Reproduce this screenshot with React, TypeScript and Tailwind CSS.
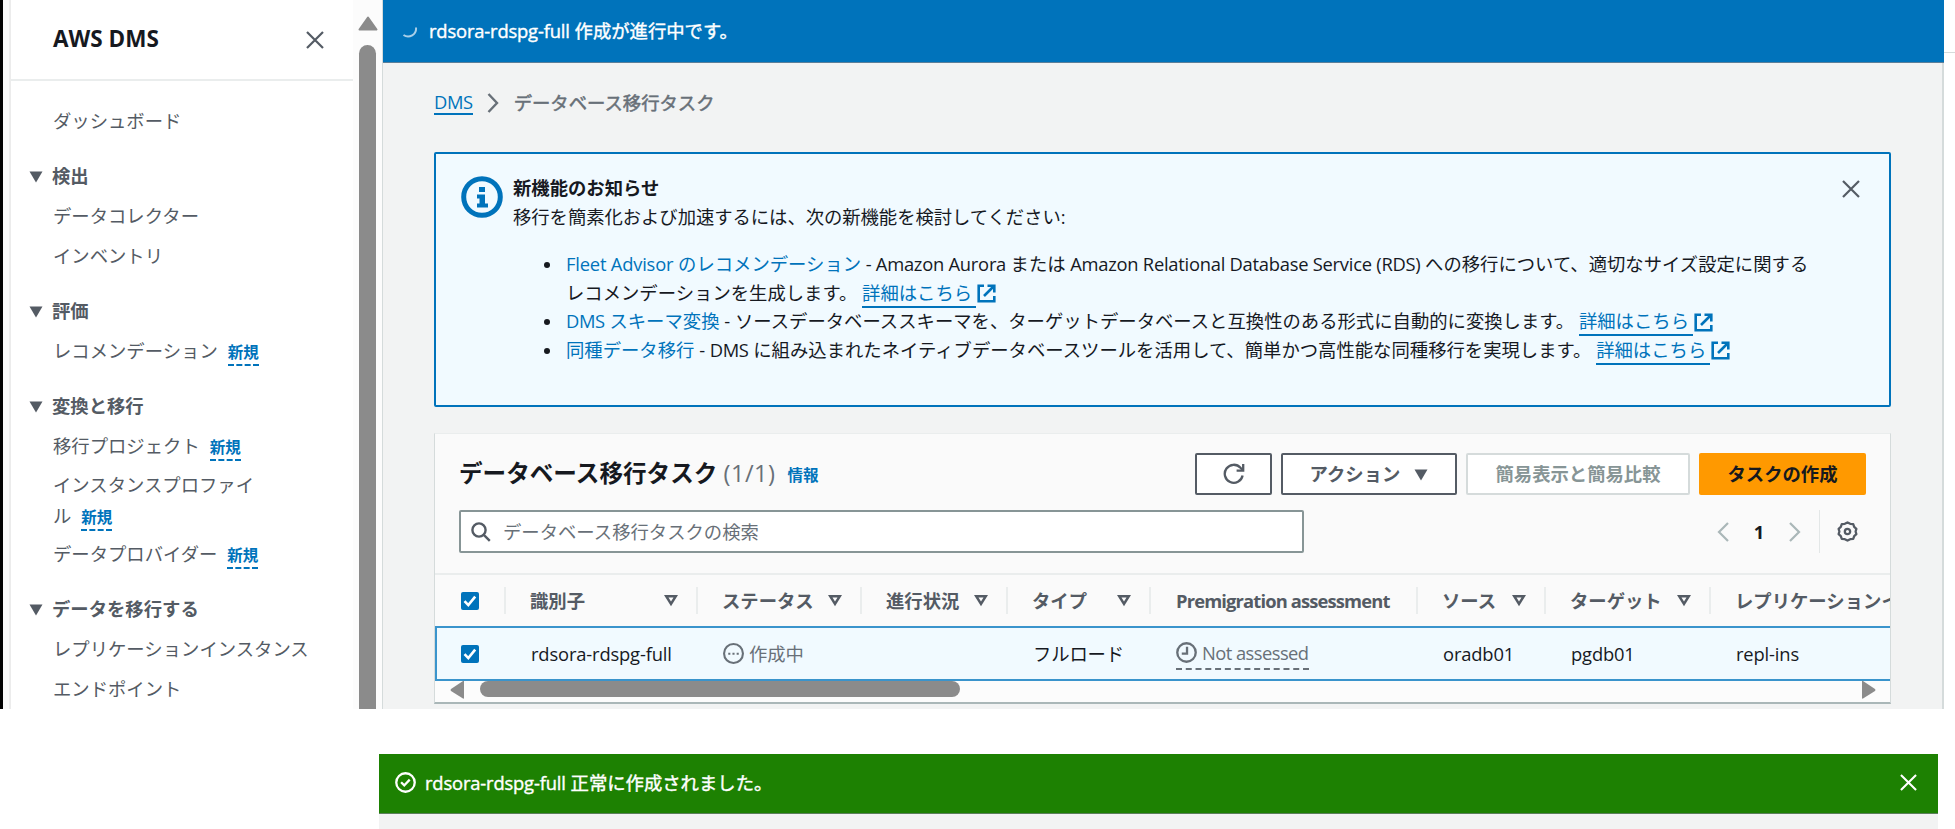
import type { ReactNode } from 'react'

function CloseIcon({ className }: { className?: string }) {
  return (
    <svg viewBox="0 0 18 18" className={className} fill="none" stroke="currentColor" strokeWidth="2.2">
      <path d="M1 1l16 16M17 1L1 17" />
    </svg>
  )
}

function ExternalIcon() {
  return (
    <svg viewBox="0 0 19 19" className="inline-block w-[19px] h-[19px] shrink-0" fill="none" stroke="currentColor" strokeWidth="2.6">
      <path d="M7 1.7H1.7v15.6h15.6V12" />
      <path d="M10.5 1.7h6.8v6.8M17 2L7 12" />
    </svg>
  )
}

function SortIcon() {
  return (
    <svg viewBox="0 0 14 13" className="w-[14px] h-[13px] shrink-0" fill="none" stroke="#545b64" strokeWidth="2.5">
      <path d="M2.2 2.2h9.6L7 9.8z" />
    </svg>
  )
}

function CaretDown() {
  return (
    <svg viewBox="0 0 14 12" className="w-[14px] h-[12px] mt-[2px] shrink-0" fill="#545b64">
      <path d="M0.5 0.5h13L7 11.5z" />
    </svg>
  )
}

function Checkbox() {
  return (
    <span className="flex items-center justify-center w-[18px] h-[18px] rounded-[2px] bg-[#0073bb] shrink-0">
      <svg viewBox="0 0 18 18" className="w-[18px] h-[18px]" fill="none" stroke="#fff" strokeWidth="2.6">
        <path d="M3.5 9.2l3.8 3.9L14.2 4.6" />
      </svg>
    </span>
  )
}

type NavItem = { label: string; isNew?: boolean }
type NavGroup = { title: string; items: NavItem[] }

const navGroups: NavGroup[] = [
  { title: '検出', items: [{ label: 'データコレクター' }, { label: 'インベントリ' }] },
  { title: '評価', items: [{ label: 'レコメンデーション', isNew: true }] },
  {
    title: '変換と移行',
    items: [
      { label: '移行プロジェクト', isNew: true },
      { label: 'インスタンスプロファイル', isNew: true },
      { label: 'データプロバイダー', isNew: true },
    ],
  },
  { title: 'データを移行する', items: [{ label: 'レプリケーションインスタンス' }, { label: 'エンドポイント' }] },
]

function NewBadge() {
  return (
    <span className="ml-[10px] text-[15.5px] leading-[20px] font-bold text-[#0073bb] border-b-2 border-dashed border-[#0073bb] pb-px">
      新規
    </span>
  )
}

function Sidebar() {
  return (
    <aside className="flex w-[383px] h-full shrink-0">
      <div className="w-[3px] bg-black" />
      <div className="w-[8px] bg-[#f9f9f9] border-r-2 border-[#ececec]" />
      <div className="w-[342px] text-[#545b64] overflow-hidden">
        <div className="flex items-center justify-between h-[81px] pl-[42px] pr-[29px] border-b-2 border-[#eaeded]">
          <h2 className="mt-[-1px] text-[22.5px] font-bold text-[#16191f]">AWS DMS</h2>
          <CloseIcon className="w-[18px] h-[18px]" />
        </div>
        <a className="flex items-center h-[40px] mt-[20px] pl-[42px]">ダッシュボード</a>
        {navGroups.map((group) => (
          <div key={group.title} className="mt-[14px]">
            <div className="flex items-center h-[41px] pl-[18px] gap-[9px] font-bold">
              <CaretDown />
              {group.title}
            </div>
            {group.items.map((item) => (
              <div key={item.label} className="flex items-center min-h-[40px] pl-[42px]">
                {item.label.length > 11 && item.isNew ? (
                  <div className="py-[3px] leading-[31px] whitespace-nowrap">
                    {item.label.slice(0, -1)}
                    <br />
                    {item.label.slice(-1)}
                    <NewBadge />
                  </div>
                ) : (
                  <div className="mt-[-1px] leading-[31px] whitespace-nowrap">
                    {item.label}
                    {item.isNew && <NewBadge />}
                  </div>
                )}
              </div>
            ))}
          </div>
        ))}
      </div>
      <div className="flex flex-col items-center w-[30px] pt-[16px] bg-[#fcfcfc] border-r border-[#d5dbdb]">
        <svg viewBox="0 0 20 15" className="w-[20px] h-[15px] shrink-0" fill="#8b8b8b" stroke="#8b8b8b" strokeWidth="2" strokeLinejoin="round">
          <path d="M10 1.5L18.5 13.5h-17z" />
        </svg>
        <div className="w-[17px] mt-[14px] grow bg-[#8b8b8b] rounded-t-full" />
      </div>
    </aside>
  )
}

function DetailLink() {
  return (
    <a className="text-[#0073bb]">
      <span className="border-b-2 border-[#0073bb] pr-[4px] pb-px">詳細はこちら</span>
      <span className="inline-block align-[1px] h-[19px] leading-[0] ml-px">
        <ExternalIcon />
      </span>
    </a>
  )
}

function NewsItem({ children }: { children: ReactNode }) {
  return (
    <li className="flex">
      <span className="w-[6px] h-[6px] mt-[12px] mr-[16px] rounded-full bg-[#16191f] shrink-0" />
      <div className="whitespace-nowrap">{children}</div>
    </li>
  )
}

function NewsPanel() {
  return (
    <section className="flex mt-[35px] w-[1457px] h-[255px] bg-[#f1faff] border-2 border-[#0073bb] rounded-[2px] pl-[25px] pr-[29px] text-[#16191f]">
      <svg viewBox="0 0 42 42" className="w-[42px] h-[42px] mt-[22px] shrink-0" fill="none" stroke="#0073bb" strokeWidth="5">
        <circle cx="21" cy="21" r="18.3" />
        <path d="M18 11h6v5h-6zM16 18.5h8v9h3v4H16v-4h2.5v-5H16z" fill="#0073bb" stroke="none" />
      </svg>
      <div className="ml-[10px] mt-[20px] grow leading-[28.5px]">
        <h3 className="font-bold">新機能のお知らせ</h3>
        <p className="tracking-[-0.05px]">移行を簡素化および加速するには、次の新機能を検討してください:</p>
        <ul className="mt-[19px] ml-[31px]">
          <NewsItem>
            <a className="text-[#0073bb]"><span className="tracking-[-0.2px]">Fleet Advisor</span> のレコメンデーション</a>
            <span className="tracking-[-0.25px]"> - Amazon Aurora </span>または
            <span className="tracking-[-0.25px]"> Amazon Relational Database Service (RDS) </span>
            への移行について、適切なサイズ設定に関する
            <br />
            レコメンデーションを生成します。 <DetailLink />
          </NewsItem>
          <NewsItem>
            <a className="text-[#0073bb]"><span className="tracking-[-0.4px]">DMS</span> スキーマ変換</a> - ソースデータベーススキーマを、ターゲットデータベースと互換性のある形式に自動的に変換します。 <DetailLink />
          </NewsItem>
          <NewsItem>
            <a className="text-[#0073bb]">同種データ移行</a> - <span className="tracking-[-0.4px]">DMS</span> に組み込まれたネイティブデータベースツールを活用して、簡単かつ高性能な同種移行を実現します。 <DetailLink />
          </NewsItem>
        </ul>
      </div>
      <CloseIcon className="w-[18px] h-[18px] mt-[26px] text-[#545b64] shrink-0" />
    </section>
  )
}

const columns = [
  { label: '識別子', width: 'w-[192px]', sort: true },
  { label: 'ステータス', width: 'w-[164px]', sort: true },
  { label: '進行状況', width: 'w-[146px]', sort: true },
  { label: 'タイプ', width: 'w-[143px]', sort: true },
  { label: 'Premigration assessment', width: 'w-[267px]', sort: false },
  { label: 'ソース', width: 'w-[128px]', sort: true },
  { label: 'ターゲット', width: 'w-[165px]', sort: true },
  { label: 'レプリケーションインスタンス', width: 'w-[320px]', sort: false },
]

function StatusCell() {
  return (
    <span className="flex items-center gap-[5px] text-[#687078]">
      <svg viewBox="0 0 20 20" className="w-[21px] h-[21px]" fill="none" stroke="currentColor" strokeWidth="2">
        <circle cx="10" cy="10" r="9" />
        <path d="M5 10.2h2M9 10.2h2M13 10.2h2" />
      </svg>
      作成中
    </span>
  )
}

function AssessmentCell() {
  return (
    <span className="flex items-center h-[32px] gap-[5px] text-[#687078] border-b-2 border-dashed border-[#687078]">
      <svg viewBox="0 0 20 20" className="w-[21px] h-[21px]" fill="none" stroke="currentColor" strokeWidth="2.2">
        <circle cx="10" cy="10" r="8.8" />
        <path d="M10.5 4.5v6.5H5.5" />
      </svg>
      <span className="tracking-[-0.55px]">Not assessed</span>
    </span>
  )
}

const cells: ReactNode[] = [
  'rdsora-rdspg-full',
  <StatusCell />,
  '',
  'フルロード',
  <AssessmentCell />,
  'oradb01',
  'pgdb01',
  'repl-ins',
]

function TaskTable() {
  return (
    <section className="mt-[26px] w-[1457px] h-[271px] bg-[#fafafa] border border-t-[#eaeded] border-x-[#d5dbdb] border-b-2 border-b-[#aab7b8] overflow-hidden">
      <div className="flex items-center h-[42px] mt-[19px] pl-[24px] pr-[24px]">
        <h2 className="mt-[-2px] text-[23.6px] font-bold text-[#16191f]">
          データベース移行タスク <span className="font-normal tracking-[0.5px] text-[#687078]">(1/1)</span>
        </h2>
        <a className="ml-[12px] mt-[2px] text-[15.5px] font-bold text-[#0073bb]">情報</a>
        <div className="flex ml-auto gap-[9px] h-[42px] font-bold text-[#545b64]">
          <button className="flex items-center justify-center w-[77px] bg-white border-2 border-[#545b64] rounded-[2px]">
            <svg viewBox="0 0 22 22" className="w-[22px] h-[22px]" fill="none" stroke="currentColor" strokeWidth="2.3">
              <path d="M19.6 12.5A9 9 0 1 1 17.5 4.8L20 7.2" />
              <path d="M20.2 1v6.6h-6.6" />
            </svg>
          </button>
          <button className="flex items-center justify-center gap-[14px] w-[176px] bg-white border-2 border-[#545b64] rounded-[2px]">
            アクション
            <CaretDown />
          </button>
          <button className="w-[224px] bg-white border-2 border-[#d5dbdb] rounded-[2px] text-[#879596]">簡易表示と簡易比較</button>
          <button className="w-[167px] bg-[#ff9900] rounded-[2px] text-[#16191f]">タスクの作成</button>
        </div>
      </div>

      <div className="flex items-center h-[43px] mt-[15px] pl-[24px] pr-[32px]">
        <div className="flex items-center w-[845px] h-full pl-[10px] bg-white border-2 border-[#879596] rounded-[2px] text-[#687078]">
          <svg viewBox="0 0 20 20" className="w-[20px] h-[20px] mr-[12px]" fill="none" stroke="#545b64" strokeWidth="2.4">
            <circle cx="8" cy="8" r="6.6" />
            <path d="M12.8 12.8l6 6" />
          </svg>
          データベース移行タスクの検索
        </div>
        <div className="flex items-center h-full ml-auto">
          <svg viewBox="0 0 12 20" className="w-[12px] h-[20px]" fill="none" stroke="#aab7b8" strokeWidth="2.2">
            <path d="M11 1L2 10l9 9" />
          </svg>
          <span className="w-[60px] text-center font-bold text-[#16191f]">1</span>
          <svg viewBox="0 0 12 20" className="w-[12px] h-[20px]" fill="none" stroke="#aab7b8" strokeWidth="2.2">
            <path d="M1 1l9 9-9 9" />
          </svg>
          <span className="w-px h-full ml-[18px] mr-[17px] bg-[#e3e7e7]" />
          <svg viewBox="0 0 22 22" className="w-[21px] h-[21px]" fill="none" stroke="#545b64" strokeWidth="2.4" strokeLinejoin="round">
            <path d="M11 1.5l2.8 1.5 3.2.2 1 3 2.3 2-.8 2.8.8 2.8-2.3 2-1 3-3.2.2L11 20.5l-2.8-1.5-3.2-.2-1-3-2.3-2 .8-2.8-.8-2.8 2.3-2 1-3 3.2-.2z" />
            <circle cx="11" cy="11" r="2.8" />
          </svg>
        </div>
      </div>

      <div className="flex items-center h-[53px] mt-[20px] border-t-2 border-[#eaeded] font-bold text-[#545b64]">
        <div className="w-[69px] pl-[26px] shrink-0">
          <Checkbox />
        </div>
        {columns.map((col) => (
          <div key={col.label} className={`flex items-center justify-between h-[27px] pl-[24px] pr-[18px] border-l-2 border-[#eaeded] shrink-0 whitespace-nowrap ${col.width}`}>
            {col.sort ? col.label : <span className={col.label.startsWith('P') ? 'pl-px tracking-[-0.85px]' : ''}>{col.label}</span>}
            {col.sort && <SortIcon />}
          </div>
        ))}
      </div>

      <div className="flex items-center w-[1800px] h-[55px] bg-[#f1faff] border-2 border-[#3a94cc] text-[#16191f]">
        <div className="w-[67px] pl-[24px] shrink-0">
          <Checkbox />
        </div>
        {cells.map((cell, i) => (
          <div key={columns[i].label} className={`flex items-center pl-[27px] shrink-0 whitespace-nowrap tracking-[-0.15px] ${columns[i].width}`}>
            {cell}
          </div>
        ))}
      </div>

      {/* horizontal scrollbar */}
      <div className="flex items-start h-[22px] pl-[15px] pr-[14px] bg-[#fcfcfc]">
        <svg viewBox="0 0 15 18" className="w-[15px] h-[18px]" fill="#8b8b8b">
          <path d="M14 0v17q0 1-1 .5L1 10Q0 9 1 8L13 0z" />
        </svg>
        <div className="w-[480px] h-[16px] ml-[15px] bg-[#8b8b8b] rounded-full" />
        <svg viewBox="0 0 15 18" className="w-[15px] h-[18px] ml-auto" fill="#8b8b8b">
          <path d="M1 0v17q0 1 1 .5L14 10q1-1 0-2L2 0z" />
        </svg>
      </div>
    </section>
  )
}

export default function App() {
  return (
    <div className="w-[1955px] h-[829px] overflow-hidden bg-white text-[18.35px] leading-[28px] font-['Open_Sans','Noto_Sans_CJK_JP',sans-serif]">
      <div className="flex h-[709px] overflow-hidden">
        <Sidebar />
        <main className="w-[1561px] bg-[#f2f3f3] border-r-2 border-[#d5dbdb] shrink-0">
          <div className="flex items-center w-[1561px] h-[63px] pl-[19px] bg-[#0073bb] border-b border-[#5c7f99] text-white">
            <svg viewBox="0 0 16 16" className="w-[16px] h-[16px] mr-[11px]" fill="none" stroke="#a9cfe8" strokeWidth="2">
              <path d="M14 4.5A8 8 0 0 1 1.5 12" />
            </svg>
            <span className="[-webkit-text-stroke:0.4px_currentColor]">
              <span className="tracking-[-0.15px]">rdsora-rdspg-full</span> 作成が進行中です。
            </span>
          </div>
          <div className="pl-[51px]">
            <nav className="flex items-center h-[28px] mt-[26px] text-[#687078]">
              <a className="leading-[22px] tracking-[-0.4px] border-b-2 border-[#0073bb] text-[#0073bb]">DMS</a>
              <svg viewBox="0 0 12 20" className="w-[12px] h-[20px] ml-[14px] mr-[15px]" fill="none" stroke="#687078" strokeWidth="2.4">
                <path d="M1.5 1l8.5 9-8.5 9" />
              </svg>
              <span className="[-webkit-text-stroke:0.5px_currentColor]">データベース移行タスク</span>
            </nav>
            <NewsPanel />
            <TaskTable />
          </div>
        </main>
        <div className="grow h-[53px] border-b border-[#d5dbdb]" />
      </div>

      <div className="w-[1559px] h-[75px] ml-[379px] mt-[45px] bg-[#f2f3f3]">
        <div className="flex items-center h-[60px] pl-[16px] pr-[21px] bg-[#1d8102] border-b border-[#5c7f5c] text-white">
          <svg viewBox="0 0 20 20" className="w-[21px] h-[21px] mt-[-2px] mr-[9px]" fill="none" stroke="currentColor" strokeWidth="2.2">
            <circle cx="10" cy="10" r="8.8" />
            <path d="M5.8 9.8l3 3 5.2-5.5" />
          </svg>
          <span className="mt-[-2px] [-webkit-text-stroke:0.4px_currentColor]">
            <span className="tracking-[-0.15px]">rdsora-rdspg-full</span> 正常に作成されました。
          </span>
          <CloseIcon className="w-[17px] h-[17px] mt-[-2px] ml-auto" />
        </div>
      </div>
    </div>
  )
}
